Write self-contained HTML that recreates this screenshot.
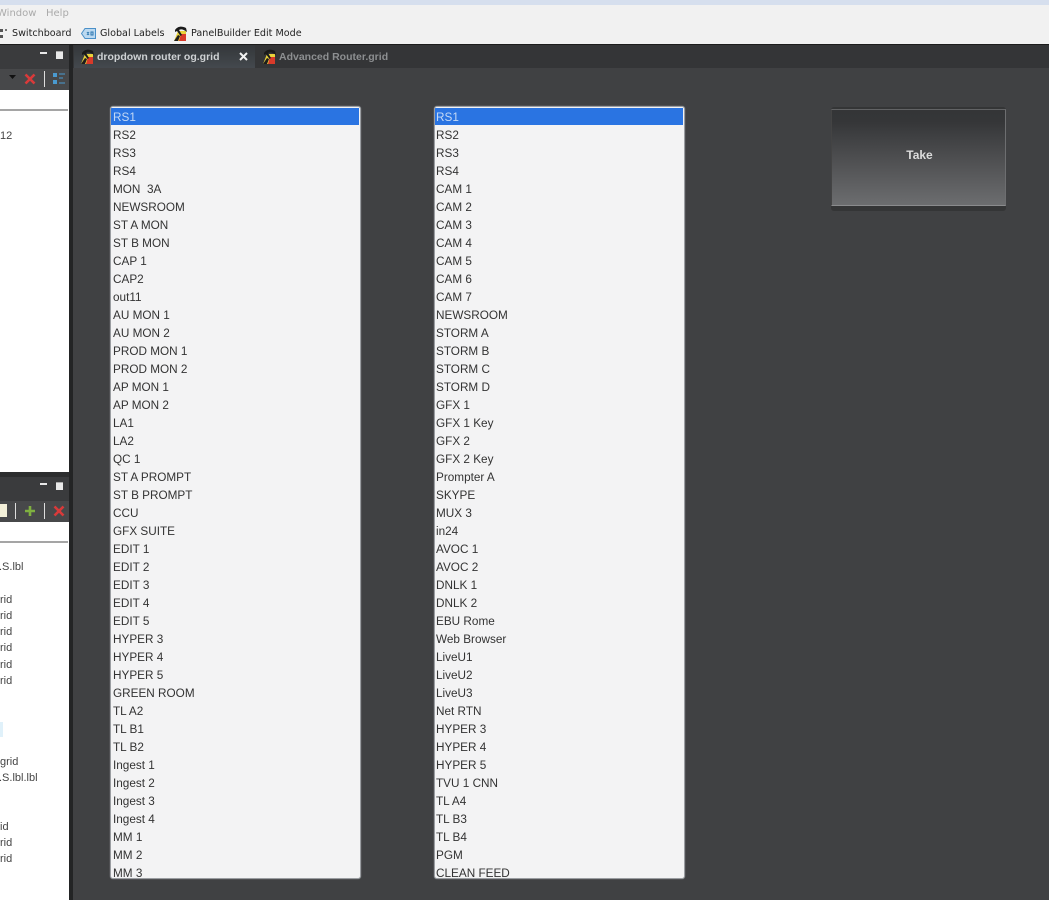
<!DOCTYPE html>
<html><head><meta charset="utf-8"><style>
html,body{margin:0;padding:0;width:1049px;height:900px;overflow:hidden;background:#404143;font-family:"Liberation Sans",sans-serif}
body{filter:blur(.35px)}
div,span,svg{position:absolute}
.list{background:#f3f3f4;border:1px solid #9a9da1;box-shadow:0 0 1px #a5a8ac;border-radius:3px;width:249px;height:771px;top:106px;overflow:hidden;box-sizing:content-box}
.list div{left:2px;margin-top:2px;height:18px;line-height:18px;font-size:11.750px;color:#333;white-space:pre;width:246px}
.list.l2 div{left:1px}
.sel{position:absolute;left:0;top:1px;width:248px;height:17px;background:#2a74e2}
.t{font-size:11px;color:#444;white-space:nowrap;line-height:14px}
.m{font-family:"DejaVu Sans",sans-serif;font-size:10px;color:#aaa;line-height:14px;white-space:nowrap}
.tb{font-family:"DejaVu Sans",sans-serif;font-size:9.6px;color:#222;white-space:nowrap;line-height:14px}
</style></head><body>
<div style="left:0;top:0;width:1049px;height:5px;background:#d6dfee"></div>
<div style="left:0;top:5px;width:1049px;height:39px;background:#f1f1f1"></div>
<span class="m" style="left:-3px;top:7px">Window</span>
<span class="m" style="left:46px;top:7px">Help</span>
<svg style="left:0;top:27px" width="10" height="13"><rect x="0" y="2" width="3" height="3" fill="#555"/><rect x="0" y="8" width="3" height="3" fill="#555"/><rect x="5" y="2" width="2" height="2" fill="#777"/></svg>
<span class="tb" style="left:12px;top:27px">Switchboard</span>
<svg style="left:81px;top:28px" width="15" height="11"><path d="M4 .5H14.500V10.500H4L.5 5.500Z" fill="#bcd9f0" stroke="#4a90c8"/><path d="M6 4L8 7M8 4L6 7M10 4V7H12V4Z" stroke="#2f78b0" fill="none"/></svg>
<span class="tb" style="left:100px;top:27px">Global Labels</span>
<svg style="left:172px;top:26px" width="16" height="16" viewBox="0 0 16 16"><use href="#pb"/></svg>
<span class="tb" style="left:191px;top:27px">PanelBuilder Edit Mode</span>

<div style="left:0;top:44px;width:1049px;height:1px;background:#1c1c1c"></div>
<!-- left panel top -->
<div style="left:0;top:45px;width:69px;height:24px;background:#3a3b3d"></div>
<div style="left:40px;top:52px;width:7px;height:2px;background:#e8e8e8"></div>
<div style="left:56px;top:51px;width:7px;height:7px;background:#e8e8e8;border-top:1px solid #aaa"></div>
<div style="left:0;top:69px;width:69px;height:21px;background:#47484a"></div>
<svg style="left:8px;top:74px" width="8" height="6"><path d="M1 1H8L4.500 5Z" fill="#111"/></svg>
<svg style="left:24px;top:73px" width="12" height="12"><path d="M1.500 1.500L10.500 10.500M10.500 1.500L1.500 10.500" stroke="#d93a3a" stroke-width="2.600"/></svg>
<div style="left:44px;top:71px;width:1px;height:16px;background:#ddd"></div>
<svg style="left:52px;top:71px" width="14" height="16"><rect x="1" y="2" width="4" height="4" fill="#4a9ad0"/><rect x="1" y="9" width="4" height="4" fill="#4a9ad0"/><path d="M7 3H13M7 7H11M7 12H13" stroke="#4a9ad0"/></svg>
<div style="left:0;top:90px;width:69px;height:382px;background:#fff"></div>
<div style="left:0;top:109px;width:68px;height:2px;background:#a5a5a5"></div>
<span class="t" style="left:0;top:129px">12</span>

<!-- left panel bottom -->
<div style="left:0;top:472px;width:69px;height:5px;background:#2c2d2e"></div>
<div style="left:0;top:477px;width:69px;height:24px;background:#3a3b3d"></div>
<div style="left:40px;top:483px;width:7px;height:2px;background:#e8e8e8"></div>
<div style="left:56px;top:482px;width:7px;height:7px;background:#e8e8e8;border-top:1px solid #aaa"></div>
<div style="left:0;top:501px;width:69px;height:21px;background:#47484a"></div>
<div style="left:0;top:504px;width:7px;height:13px;background:#f2efd8"></div>
<div style="left:15px;top:503px;width:1px;height:16px;background:#ddd"></div>
<svg style="left:24px;top:505px" width="12" height="12"><path d="M6 1V11M1 6H11" stroke="#7fb040" stroke-width="2.600"/></svg>
<div style="left:44px;top:503px;width:1px;height:16px;background:#ddd"></div>
<svg style="left:53px;top:505px" width="12" height="12"><path d="M1.500 1.500L10.500 10.500M10.500 1.500L1.500 10.500" stroke="#d93a3a" stroke-width="2.600"/></svg>
<div style="left:0;top:522px;width:69px;height:378px;background:#fff"></div>
<div style="left:0;top:541px;width:68px;height:2px;background:#a5a5a5"></div>
<span class="t" style="left:-1px;top:560px">.S.lbl</span>
<span class="t" style="left:0;top:593px">rid</span>
<span class="t" style="left:0;top:609px">rid</span>
<span class="t" style="left:0;top:625px">rid</span>
<span class="t" style="left:0;top:641px">rid</span>
<span class="t" style="left:0;top:658px">rid</span>
<span class="t" style="left:0;top:674px">rid</span>
<div style="left:0;top:722px;width:3px;height:15px;background:#e0f1fa"></div>
<span class="t" style="left:0;top:755px">grid</span>
<span class="t" style="left:-1px;top:771px">.S.lbl.lbl</span>
<span class="t" style="left:0;top:820px">id</span>
<span class="t" style="left:0;top:836px">rid</span>
<span class="t" style="left:0;top:852px">rid</span>

<div style="left:69px;top:45px;width:4px;height:855px;background:#232425"></div>
<!-- tabs -->
<div style="left:73px;top:45px;width:976px;height:23px;background:#343537"></div>
<div style="left:74px;top:45px;width:181px;height:23px;background:linear-gradient(#34373a,#44494e)"></div>
<svg style="left:79px;top:49px" width="16" height="16" viewBox="0 0 16 16"><defs><g id="pb"><path d="M2 15L6 5H14V15Z" fill="#e8d23a"/><path d="M9 8H14V15H7Z" fill="#d83a2a"/><path d="M2 15L6 9L8 10L6 15Z" fill="#1d1d1d"/><path d="M3 4C6 0 10 0 14 2L15 6C11 3 9 3 7 4L10 9L8.500 10L5 5L3 6Z" fill="#1a1a1a"/></g></defs><use href="#pb"/></svg>
<span style="left:97px;top:50px;font-size:10.500px;font-weight:bold;line-height:15px;color:#cfd2d4;white-space:nowrap">dropdown router og.grid</span>
<svg style="left:239px;top:52px" width="9" height="9"><path d="M1 1L8 8M8 1L1 8" stroke="#f2f2f2" stroke-width="2"/></svg>
<svg style="left:261px;top:49px" width="16" height="16" viewBox="0 0 16 16"><use href="#pb"/></svg>
<span style="left:279px;top:50px;font-size:10.500px;font-weight:bold;line-height:15px;color:#8d8f91;white-space:nowrap">Advanced Router.grid</span>
<div style="left:73px;top:68px;width:976px;height:832px;background:#404143"></div>

<!-- list 1 -->
<div class="list" style="left:110px"><span class="sel"></span>
<div style="top:0;color:#c4d9f5">RS1</div><div style="top:18px">RS2</div><div style="top:36px">RS3</div><div style="top:54px">RS4</div><div style="top:72px">MON  3A</div><div style="top:90px">NEWSROOM</div><div style="top:108px">ST A MON</div><div style="top:126px">ST B MON</div><div style="top:144px">CAP 1</div><div style="top:162px">CAP2</div><div style="top:180px">out11</div><div style="top:198px">AU MON 1</div><div style="top:216px">AU MON 2</div><div style="top:234px">PROD MON 1</div><div style="top:252px">PROD MON 2</div><div style="top:270px">AP MON 1</div><div style="top:288px">AP MON 2</div><div style="top:306px">LA1</div><div style="top:324px">LA2</div><div style="top:342px">QC 1</div><div style="top:360px">ST A PROMPT</div><div style="top:378px">ST B PROMPT</div><div style="top:396px">CCU</div><div style="top:414px">GFX SUITE</div><div style="top:432px">EDIT 1</div><div style="top:450px">EDIT 2</div><div style="top:468px">EDIT 3</div><div style="top:486px">EDIT 4</div><div style="top:504px">EDIT 5</div><div style="top:522px">HYPER 3</div><div style="top:540px">HYPER 4</div><div style="top:558px">HYPER 5</div><div style="top:576px">GREEN ROOM</div><div style="top:594px">TL A2</div><div style="top:612px">TL B1</div><div style="top:630px">TL B2</div><div style="top:648px">Ingest 1</div><div style="top:666px">Ingest 2</div><div style="top:684px">Ingest 3</div><div style="top:702px">Ingest 4</div><div style="top:720px">MM 1</div><div style="top:738px">MM 2</div><div style="top:756px">MM 3</div>
</div>
<!-- list 2 -->
<div class="list l2" style="left:434px"><span class="sel"></span>
<div style="top:0;color:#c4d9f5">RS1</div><div style="top:18px">RS2</div><div style="top:36px">RS3</div><div style="top:54px">RS4</div><div style="top:72px">CAM 1</div><div style="top:90px">CAM 2</div><div style="top:108px">CAM 3</div><div style="top:126px">CAM 4</div><div style="top:144px">CAM 5</div><div style="top:162px">CAM 6</div><div style="top:180px">CAM 7</div><div style="top:198px">NEWSROOM</div><div style="top:216px">STORM A</div><div style="top:234px">STORM B</div><div style="top:252px">STORM C</div><div style="top:270px">STORM D</div><div style="top:288px">GFX 1</div><div style="top:306px">GFX 1 Key</div><div style="top:324px">GFX 2</div><div style="top:342px">GFX 2 Key</div><div style="top:360px">Prompter A</div><div style="top:378px">SKYPE</div><div style="top:396px">MUX 3</div><div style="top:414px">in24</div><div style="top:432px">AVOC 1</div><div style="top:450px">AVOC 2</div><div style="top:468px">DNLK 1</div><div style="top:486px">DNLK 2</div><div style="top:504px">EBU Rome</div><div style="top:522px">Web Browser</div><div style="top:540px">LiveU1</div><div style="top:558px">LiveU2</div><div style="top:576px">LiveU3</div><div style="top:594px">Net RTN</div><div style="top:612px">HYPER 3</div><div style="top:630px">HYPER 4</div><div style="top:648px">HYPER 5</div><div style="top:666px">TVU 1 CNN</div><div style="top:684px">TL A4</div><div style="top:702px">TL B3</div><div style="top:720px">TL B4</div><div style="top:738px">PGM</div><div style="top:756px">CLEAN FEED</div>
</div>

<!-- Take button -->
<div style="left:831px;top:107px;width:175px;height:104px;background:#343536;border-radius:3px"></div>
<div style="left:831px;top:109px;width:175px;height:97px;background:linear-gradient(#343537 0,#353638 12%,#6c6d6f 100%);border-top:1px solid #626365;border-bottom:1px solid #8a8b8d;border-left:1px solid #444;border-right:1px solid #6d6e70;box-sizing:border-box"></div>
<span style="left:832px;top:148px;width:175px;text-align:center;font-size:12px;font-weight:bold;line-height:15px;color:#dcdcdc">Take</span>
</body></html>
